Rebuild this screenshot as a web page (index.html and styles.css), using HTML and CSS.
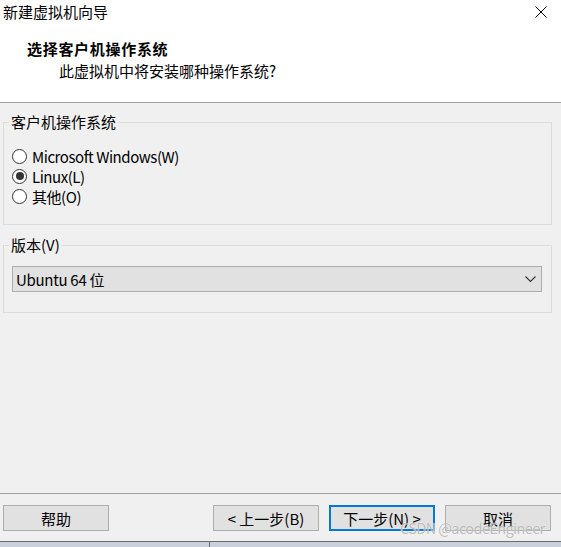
FILE: index.html
```html
<!DOCTYPE html>
<html lang="zh-CN">
<head>
    <meta charset="UTF-8">
    <title>新建虚拟机向导</title>
    <link rel="stylesheet" href="styles.css">
</head>
<body>
    <div class="window">
        <div class="header">
            <div class="titlebar">
                <span class="title">新建虚拟机向导</span>
                <svg class="close" width="12" height="12" viewBox="0 0 12 12">
                    <path d="M0.5 0.5 L11.5 11.5 M11.5 0.5 L0.5 11.5" stroke="#000" stroke-width="1" fill="none"/>
                </svg>
            </div>
            <div class="heading">选择客户机操作系统</div>
            <div class="subheading">此虚拟机中将安装哪种操作系统?</div>
        </div>

        <div class="content">
            <fieldset class="group group-os">
                <legend>客户机操作系统</legend>
                <label class="radio"><span class="dot"></span>Microsoft Windows(W)</label>
                <label class="radio"><span class="dot checked"></span>Linux(L)</label>
                <label class="radio"><span class="dot"></span>其他(O)</label>
            </fieldset>

            <fieldset class="group group-version">
                <legend>版本(V)</legend>
                <div class="select">
                    <span>Ubuntu 64 位</span>
                    <svg width="11" height="7" viewBox="0 0 11 7">
                        <path d="M0.5 0.5 L5.5 5.5 L10.5 0.5" stroke="#333" stroke-width="1.1" fill="none"/>
                    </svg>
                </div>
            </fieldset>
        </div>

        <div class="footer">
            <button class="btn">帮助</button>
            <div class="spacer"></div>
            <button class="btn">&lt; 上一步(B)</button>
            <button class="btn btn-default">下一步(N) &gt;</button>
            <button class="btn">取消</button>
            <span class="watermark">CSDN @acodeEngineer</span>
        </div>

        <div class="under"><div class="under-left"></div></div>
    </div>
</body>
</html>
```

FILE: styles.css
```css
:root {
    --panel-bg: #f0f0f0;
    --group-border: #dcdcdc;
    --button-bg: #e1e1e1;
    --button-border: #adadad;
    --focus-blue: #0078d7;
    --text-color: #000;
}

body {
    margin: 0;
    font-family: "Noto Sans CJK SC", "Noto Sans", sans-serif;
    font-size: 15px;
    color: var(--text-color);
}

.window {
    width: 561px;
    height: 547px;
    display: flex;
    flex-direction: column;
    background: var(--panel-bg);
    overflow: hidden;
}

.header {
    background: #fff;
    border-bottom: 1px solid #a0a0a0;
    padding-bottom: 21px;
}

.titlebar {
    height: 24px;
    display: flex;
    align-items: center;
    justify-content: space-between;
    padding: 0 14px 0 3px;
    line-height: 24px;
}

.heading {
    margin-top: 15px;
    padding-left: 27px;
    font-weight: bold;
    line-height: 20px;
    letter-spacing: 0.7px;
}

.subheading {
    margin-top: 2px;
    padding-left: 59px;
    line-height: 20px;
}

.content {
    flex: 1;
    padding: 9px 9px 0 3px;
}

.group {
    margin: 0;
    border: 1px solid var(--group-border);
    padding: 14px 9px 18px 8px;
}

.group legend {
    padding: 0 2px;
    margin-left: -3px;
    line-height: 20px;
}

.group-version {
    margin-top: 10px;
    padding-top: 11px;
    padding-bottom: 20px;
}

.radio {
    display: flex;
    align-items: center;
    height: 20px;
    letter-spacing: -0.45px;
}

.dot {
    width: 13px;
    height: 13px;
    border: 1px solid #333;
    border-radius: 50%;
    background: #fff;
    margin-right: 5px;
    display: flex;
    align-items: center;
    justify-content: center;
}

.dot.checked::after {
    content: "";
    width: 8px;
    height: 8px;
    border-radius: 50%;
    background: #333;
}

.select {
    height: 24px;
    border: 1px solid var(--button-border);
    background: var(--button-bg);
    display: flex;
    align-items: center;
    justify-content: space-between;
    padding: 0 5px 0 3px;
    letter-spacing: -0.3px;
}

.footer {
    position: relative;
    border-top: 1px solid #a0a0a0;
    display: flex;
    align-items: center;
    gap: 10px;
    padding: 11px 10px 10px 3px;
}

.spacer {
    flex: 1;
}

.btn {
    width: 106px;
    height: 26px;
    margin: 0;
    padding: 0;
    border: 1px solid var(--button-border);
    background: var(--button-bg);
    font-family: inherit;
    font-size: 15px;
    color: var(--text-color);
}

.btn-default {
    border: 2px solid var(--focus-blue);
}

.watermark {
    position: absolute;
    left: 400px;
    top: 24px;
    white-space: nowrap;
    color: rgba(150, 150, 150, 0.65);
    font-size: 14.5px;
    line-height: 20px;
    letter-spacing: -0.6px;
    text-shadow: 0 0 1px #fff;
    pointer-events: none;
}

.under {
    height: 5px;
    border-top: 1px solid #6d6d6d;
    background: #c9d1dc;
}

.under-left {
    width: 209px;
    height: 100%;
    border-right: 1px solid #6d6d6d;
}
```
